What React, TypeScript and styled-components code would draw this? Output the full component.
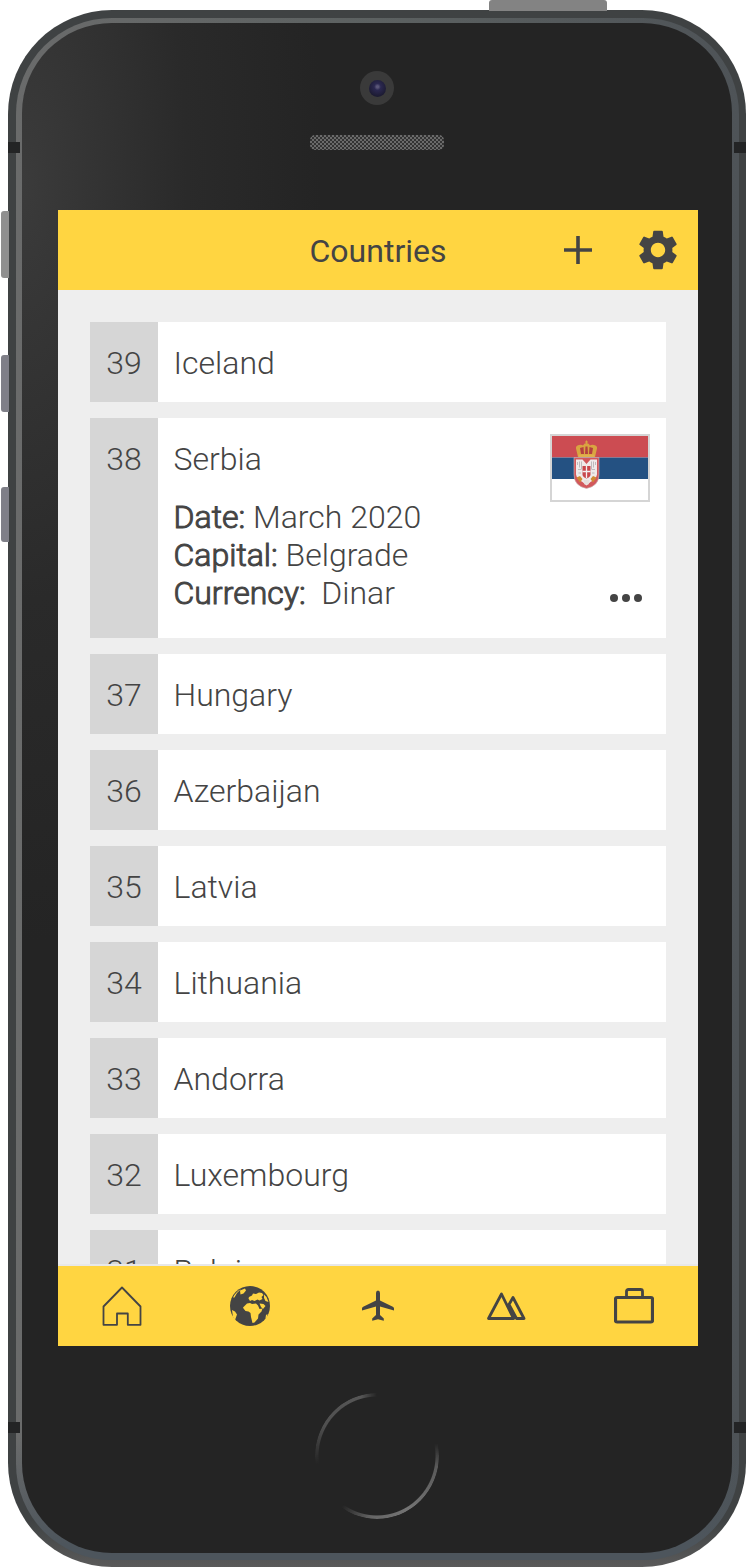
import * as React from 'react';
import styled, { createGlobalStyle } from 'styled-components';
import { MdSettings } from 'react-icons/md';

const GlobalStyle = createGlobalStyle`
  html, body {
    margin: 0;
    background: #fff;
  }
  * {
    box-sizing: border-box;
  }
`;

const Stage = styled.div`
  position: relative;
  width: 748px;
  height: 1568px;
  padding: 10px 2px 1px 8px;
  font-family: Roboto, "Liberation Sans", sans-serif;
  color: #444;
  overflow: hidden;
`;

const SideKey = styled.div<{ $top: number; $height: number; $tone: string }>`
  position: absolute;
  left: 1px;
  top: ${(p) => p.$top}px;
  width: 8px;
  height: ${(p) => p.$height}px;
  background: ${(p) => p.$tone};
  border-radius: 3px 0 0 3px;
`;

const TopKey = styled.div`
  position: absolute;
  left: 489px;
  top: 0;
  width: 118px;
  height: 11px;
  background: #838383;
  border-radius: 3px 3px 0 0;
`;

const Notch = styled.div<{ $top: number; $side: 'left' | 'right' }>`
  position: absolute;
  ${(p) => (p.$side === 'left' ? 'left: 8px;' : 'left: 734px;')}
  top: ${(p) => p.$top}px;
  width: 12px;
  height: 11px;
  background: #232425;
`;

const Shell = styled.div`
  height: 100%;
  padding: 8px 7px 7px 8px;
  border-radius: 104px;
  background: linear-gradient(180deg, #3f4243 97%, #5a5a5a 100%);
`;

const Rim = styled.div`
  height: 100%;
  padding: 5px 7px 7px 6px;
  border-radius: 96px;
  background:
    linear-gradient(180deg, rgba(77, 85, 92, 0) 92%, #4d555c 99%),
    linear-gradient(90deg, #6a6b6b, #5c6161 50%, #4e5357);
`;

const Face = styled.div`
  height: 100%;
  display: flex;
  flex-direction: column;
  border-radius: 90px;
  background:
    radial-gradient(ellipse 300px 760px at 0 160px, #3b3b3b, #2a2a2a 55%, rgba(36, 36, 36, 0) 100%),
    #242424;
`;

const Earpiece = styled.div`
  height: 187px;
  display: flex;
  flex-direction: column;
  align-items: center;
  padding-top: 48px;
  gap: 30px;
`;

const Camera = styled.div`
  width: 34px;
  height: 34px;
  display: flex;
  align-items: center;
  justify-content: center;
  border-radius: 50%;
  background: #3a3a3a;
`;

const Lens = styled.div`
  width: 17px;
  height: 17px;
  border-radius: 50%;
  background: radial-gradient(circle at 50% 40%, #5a5678 0 8%, #2b2850 25%, #1b1a30 75%);
`;

const Speaker = styled.div`
  width: 134px;
  height: 15px;
  border-radius: 5px;
  background: repeating-conic-gradient(#6a6a6a 0 25%, #333 0 50%) 0 0 / 4px 4px;
`;

const Screen = styled.div`
  width: 640px;
  height: 1136px;
  margin-left: 36px;
  display: flex;
  flex-direction: column;
  background: #eeeeee;
`;

const Header = styled.header`
  flex: none;
  height: 80px;
  display: grid;
  grid-template-columns: 1fr auto 1fr;
  align-items: center;
  background: #ffd541;
`;

const Title = styled.h1`
  grid-column: 2;
  margin: 2px 0 0;
  font-size: 32px;
  font-weight: 400;
`;

const HeaderActions = styled.div`
  grid-column: 3;
  display: flex;
  justify-content: flex-end;
  align-items: center;
  gap: 46px;
  padding-right: 20px;
  color: #444;
`;

const List = styled.main`
  flex: 1;
  min-height: 0;
  overflow: hidden;
  display: flex;
  flex-direction: column;
  gap: 16px;
  padding: 32px;
  border-bottom: 2px solid #e8e8e8;
`;

const Row = styled.div<{ $open?: boolean }>`
  flex: none;
  display: flex;
  height: ${(p) => (p.$open ? 220 : 80)}px;
  background: #fff;
`;

const Rank = styled.div`
  flex: none;
  width: 68px;
  height: 100%;
  padding-top: 21px;
  background: #d6d6d6;
  text-align: center;
  font-size: 32px;
  font-weight: 300;
  line-height: 40px;
`;

const RowBody = styled.div`
  flex: 1;
  display: flex;
  padding: 21px 16px 20px 15.5px;
  font-size: 32px;
  font-weight: 300;
  line-height: 40px;
`;

const Info = styled.div`
  flex: 1;
`;

const Details = styled.div`
  margin-top: 19px;
  line-height: 38px;
`;

const Label = styled.span`
  font-weight: 300;
  -webkit-text-stroke: 1px #444;
`;

const Extras = styled.div`
  display: flex;
  flex-direction: column;
  align-items: flex-end;
  justify-content: space-between;
  margin-top: -5px;
  margin-bottom: 16px;
`;

const Flag = styled.div`
  width: 100px;
  height: 68px;
  border: 2px solid #d5d5d5;
`;

const More = styled.div`
  display: flex;
  gap: 4px;
  margin-right: 8px;
`;

const Dot = styled.span`
  width: 8px;
  height: 8px;
  border-radius: 50%;
  background: #444;
`;

const TabBar = styled.nav`
  flex: none;
  height: 80px;
  display: grid;
  grid-template-columns: repeat(5, 128px);
  align-items: center;
  justify-items: center;
  background: #ffd541;
  color: #444;
`;

const Chin = styled.div`
  flex: 1;
  display: flex;
  justify-content: center;
  padding-top: 47px;
`;

const HomeButton = styled.div`
  width: 124px;
  height: 126px;
  border-radius: 50%;
  background: conic-gradient(
    from 0deg,
    rgba(120, 120, 120, 0) 0deg,
    rgba(120, 120, 120, 0) 78deg,
    #5a5a5a 100deg,
    #747474 150deg,
    #666 185deg,
    rgba(120, 120, 120, 0) 215deg,
    rgba(120, 120, 120, 0) 262deg,
    #505050 300deg,
    #565656 345deg,
    rgba(120, 120, 120, 0) 360deg
  );
  -webkit-mask: radial-gradient(closest-side, transparent calc(100% - 4px), #000 calc(100% - 3px));
  mask: radial-gradient(closest-side, transparent calc(100% - 4px), #000 calc(100% - 3px));
`;

const Plus = () => (
  <svg width="28" height="28" viewBox="0 0 28 28">
    <path d="M0 14h28M14 0v28" stroke="currentColor" strokeWidth="3.6" fill="none" />
  </svg>
);

const HouseIcon = () => (
  <svg width="40" height="40" viewBox="0 0 40 40" fill="none">
    <path
      d="M1.500 20.500 20 1.500l18.500 19v18.300H25.800V27.500H15v11.300H1.500z"
      stroke="currentColor"
      strokeWidth="1.800"
      strokeLinejoin="round"
    />
  </svg>
);

const GlobeIcon = () => (
  <svg width="40" height="40" viewBox="0 0 40 40">
    <circle cx="20" cy="20" r="20" fill="currentColor" />
    <g fill="#ffd541">
      <path d="M13 21.500l4-4 3-.5 2 1 4-.5 2 2 1.500 3.500 3-.5-1 3-3 3-.5 4-3.500 4-2 .5-1.500-6-.5-4-2-1.500-3-.5-2-2.500z" />
      <path d="M19 11l3-1.500 1-2 3 .5 3-1.500 3 .5 1.500 2-2 2 1 2-3 1.500-2-1-3 1.500-2.500-1-2 1-1.500-2.500z" />
      <path d="M29.500 17.500l4 .5 2 2-2.500 3-2-2zM34 8.500l2.500 2.500 2 5-3-1-1.500-3zM10 4.500l5-2 1 2-2.500 3-3 1zM2 24l3 1.500 2 3-2 5.500-2-3zM36 29l1.500-1-1 5-1-1z" />
      <path d="M3 11.500Q6 5.500 11 3 6.500 6.500 4.500 11.500z" />
    </g>
  </svg>
);

const PlaneIcon = () => (
  <svg width="32" height="32" viewBox="0 0 32 32">
    <path
      fill="currentColor"
      d="M16 0.500q2 0 2 2.500V10.500l12.800 6.200q1.200.6 1.200 1.600v2.200l-14-4.100V25l3.800 3.400v2.400L16 29.300l-5.800 1.500v-2.400L14 25V16.400L0 20.500v-2.200q0-1 1.200-1.600L14 10.500V3q0-2.500 2-2.500z"
    />
  </svg>
);

const PeaksIcon = () => (
  <svg width="39" height="28" viewBox="0 0 39 28" fill="none">
    <path
      d="M1.500 26.500 14.500 2 26.500 26.500zM22 12.500l4-7L37 26.500H29.500z"
      stroke="currentColor"
      strokeWidth="2.800"
      strokeLinejoin="round"
    />
  </svg>
);

const CaseIcon = () => (
  <svg width="40" height="36" viewBox="0 0 40 36" fill="none">
    <rect x="1.500" y="9.500" width="37" height="24.500" rx="1.500" stroke="currentColor" strokeWidth="3.200" />
    <path d="M12.500 9V3.500Q12.500 1.500 14.500 1.500H26.500q2 0 2 2V9" stroke="currentColor" strokeWidth="2.800" />
  </svg>
);

const SerbianFlag = () => (
  <svg width="96" height="64" viewBox="0 0 96 64" style={{ display: 'block' }}>
    <rect width="96" height="21.500" fill="#cc4c52" />
    <rect y="21.500" width="96" height="21.500" fill="#245182" />
    <rect y="43" width="96" height="21" fill="#fff" />
    {/* crown */}
    <path d="M26 21l-2-8.500q-.5-3 3-3.500 2.500-.5 4 .5 1-2.500 3.500-2.500t3.500 2.500q1.500-1 4-.5 3.500.5 3 3.500l-2 8.500z" fill="#d9a441" />
    <path d="M34 4.500h1v3h-1zM33 5.500h3v1h-3z" fill="#d9a441" />
    <path d="M28 12l1 6h3l-.5-7zM41 12l-1 6h-3l.5-7z" fill="#b5403f" />
    <path d="M33.500 10.500h2l.5 7.500h-3z" fill="#b5403f" />
    <rect x="26.500" y="18.500" width="16" height="2.500" fill="#e0b04d" />
    {/* shield */}
    <path d="M22 21.500h25v17q0 11.500-12.500 14Q22 50 22 38.500z" fill="#d2585c" stroke="#c9bcbc" strokeWidth=".6" />
    <path d="M24 23.500h6.500l4 4.500 4-4.500H45v15q-1 5-6.500 7.500l-4 3.500-4-3.500Q25 43.500 24 38.500z" fill="#efeaea" />
    <path d="M25.500 26v3m2-3.500v6m2-6v8M43.500 26v3m-2-3.500v6m-2-6v8M26 33.500h3M40 33.500h3M26.500 37h2.500M40 37h2.500" stroke="#a9a5a8" strokeWidth=".7" fill="none" />
    <path d="M30.500 30h8v8.500q0 2.500-4 4-4-1.500-4-4z" fill="#c8474c" />
    <path d="M34.500 30v12M30.500 35.500h8" stroke="#f4f0f0" strokeWidth="1.300" />
    <path d="M24.500 41.500l3.500-1.500 2.500 3-2.500 3.500zM44.500 41.500l-3.500-1.500-2.500 3 2.500 3.500z" fill="#cf8a34" />
    <path d="M31.500 44h6l-1 4.500h-4z" fill="#e6dfdc" />
  </svg>
);

const countries = [
  { rank: 39, name: 'Iceland' },
  { rank: 38, name: 'Serbia', open: true },
  { rank: 37, name: 'Hungary' },
  { rank: 36, name: 'Azerbaijan' },
  { rank: 35, name: 'Latvia' },
  { rank: 34, name: 'Lithuania' },
  { rank: 33, name: 'Andorra' },
  { rank: 32, name: 'Luxembourg' },
  { rank: 31, name: 'Belgium' },
];

const App: React.FC = () => (
  <Stage>
    <GlobalStyle />
    <TopKey />
    <SideKey $top={211} $height={67} $tone="#8f8f8f" />
    <SideKey $top={355} $height={57} $tone="#7f7f88" />
    <SideKey $top={487} $height={55} $tone="#7f7f88" />
    <Shell>
      <Rim>
        <Face>
          <Earpiece>
            <Camera>
              <Lens />
            </Camera>
            <Speaker />
          </Earpiece>
          <Screen>
            <Header>
              <Title>Countries</Title>
              <HeaderActions>
                <Plus />
                <MdSettings size={48} style={{ margin: '0 -4px' }} />
              </HeaderActions>
            </Header>
            <List>
              {countries.map((c) => (
                <Row key={c.rank} $open={c.open}>
                  <Rank>{c.rank}</Rank>
                  <RowBody>
                    <Info>
                      {c.name}
                      {c.open && (
                        <Details>
                          <div>
                            <Label>Date:</Label> March 2020
                          </div>
                          <div>
                            <Label>Capital:</Label> Belgrade
                          </div>
                          <div>
                            <Label>Currency:</Label>&nbsp; Dinar
                          </div>
                        </Details>
                      )}
                    </Info>
                    {c.open && (
                      <Extras>
                        <Flag>
                          <SerbianFlag />
                        </Flag>
                        <More>
                          <Dot />
                          <Dot />
                          <Dot />
                        </More>
                      </Extras>
                    )}
                  </RowBody>
                </Row>
              ))}
            </List>
            <TabBar>
              <HouseIcon />
              <GlobeIcon />
              <PlaneIcon />
              <PeaksIcon />
              <CaseIcon />
            </TabBar>
          </Screen>
          <Chin>
            <HomeButton />
          </Chin>
        </Face>
      </Rim>
    </Shell>
    <Notch $top={142} $side="left" />
    <Notch $top={142} $side="right" />
    <Notch $top={1422} $side="left" />
    <Notch $top={1422} $side="right" />
  </Stage>
);

export default App;
